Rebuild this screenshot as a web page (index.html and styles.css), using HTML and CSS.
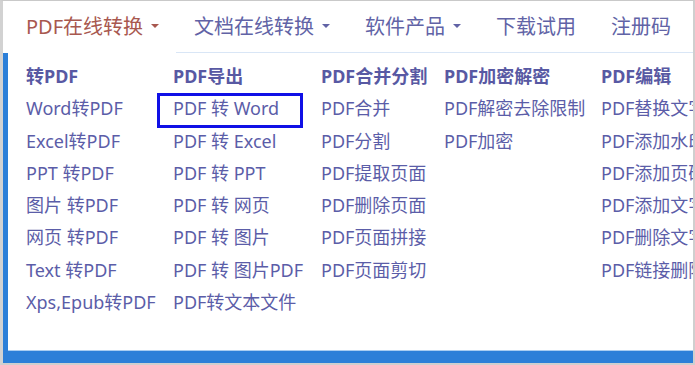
FILE: index.html
```html
<!DOCTYPE html>
<html lang="zh-CN">
<head>
  <meta charset="UTF-8">
  <title>PDF在线转换</title>
  <link rel="stylesheet" href="styles.css">
</head>
<body>
  <div class="frame">
    <div class="nav">
      <a class="nav-link open">PDF在线转换<span class="caret"></span></a>
      <a class="nav-link">文档在线转换<span class="caret"></span></a>
      <a class="nav-link">软件产品<span class="caret"></span></a>
      <a class="nav-link">下载试用</a>
      <a class="nav-link">注册码</a>
    </div>

    <div class="drop">
      <div class="panel">
        <div class="col">
          <div class="head">转PDF</div>
          <a class="item">Word转PDF</a>
          <a class="item">Excel转PDF</a>
          <a class="item">PPT 转PDF</a>
          <a class="item">图片 转PDF</a>
          <a class="item">网页 转PDF</a>
          <a class="item">Text 转PDF</a>
          <a class="item">Xps,Epub转PDF</a>
        </div>
        <div class="col">
          <div class="head">PDF导出</div>
          <a class="item marked">PDF 转 Word</a>
          <a class="item">PDF 转 Excel</a>
          <a class="item">PDF 转 PPT</a>
          <a class="item">PDF 转 网页</a>
          <a class="item">PDF 转 图片</a>
          <a class="item">PDF 转 图片PDF</a>
          <a class="item">PDF转文本文件</a>
        </div>
        <div class="col">
          <div class="head">PDF合并分割</div>
          <a class="item">PDF合并</a>
          <a class="item">PDF分割</a>
          <a class="item">PDF提取页面</a>
          <a class="item">PDF删除页面</a>
          <a class="item">PDF页面拼接</a>
          <a class="item">PDF页面剪切</a>
        </div>
        <div class="col">
          <div class="head">PDF加密解密</div>
          <a class="item">PDF解密去除限制</a>
          <a class="item">PDF加密</a>
        </div>
        <div class="col">
          <div class="head">PDF编辑</div>
          <a class="item">PDF替换文字</a>
          <a class="item">PDF添加水印</a>
          <a class="item">PDF添加页码</a>
          <a class="item">PDF添加文字</a>
          <a class="item">PDF删除文字</a>
          <a class="item">PDF链接删除</a>
        </div>
      </div>
    </div>
  </div>
</body>
</html>
```

FILE: styles.css
```css
body {
  margin: 0;
  padding: 0;
  background: #fff;
  font-family: "Noto Sans", "Noto Sans CJK SC", sans-serif;
}

.frame {
  box-sizing: border-box;
  width: 695px;
  height: 365px;
  border: 1px solid #c9c9c9;
  border-left: 3px solid #d2d2d2;
  border-right: 2px solid #cfcfcf;
  border-bottom: 2px solid #cfcfcf;
  display: flex;
  flex-direction: column;
  overflow: hidden;
}

/* top menu */
.nav {
  display: flex;
  height: 52px;
  box-sizing: border-box;
  margin-left: 5px;
  border-bottom: 1px solid #d9e6f6;
  white-space: nowrap;
}

.nav-link {
  display: flex;
  align-items: center;
  height: 48px;
  padding: 0 17px 0 18px;
  font-size: 20px;
  color: #6163a6;
}

.nav-link.open {
  color: #a8584f;
  background: #fff;
  height: 52px;
  margin-bottom: -1px;
  padding-bottom: 4px;
  box-sizing: border-box;
}

.caret {
  display: inline-block;
  width: 0;
  height: 0;
  margin-left: 8px;
  margin-top: 2px;
  border-top: 4px solid currentColor;
  border-left: 4px solid transparent;
  border-right: 4px solid transparent;
}

/* dropdown */
.drop {
  flex: 1;
  background: #2c7fd8;
  padding: 0 0 12px 5px;
  display: flex;
  flex-direction: column;
}

.panel {
  flex: 1;
  background: #fff;
  border-bottom: 1px solid #a9cdf1;
  display: grid;
  grid-template-columns: 147px 148px 123px 157px 200px;
  padding: 7px 0 0 18px;
  white-space: nowrap;
  font-size: 18px;
  line-height: 32.3px;
  color: #5b5da8;
}

.col {
  display: flex;
  flex-direction: column;
}

.head {
  font-weight: 700;
  color: #5859a3;
}

.item {
  position: relative;
}

.item.marked::after {
  content: "";
  position: absolute;
  left: -16px;
  top: 1px;
  width: 146px;
  height: 35px;
  box-sizing: border-box;
  border: 3px solid #1010e6;
}
```
